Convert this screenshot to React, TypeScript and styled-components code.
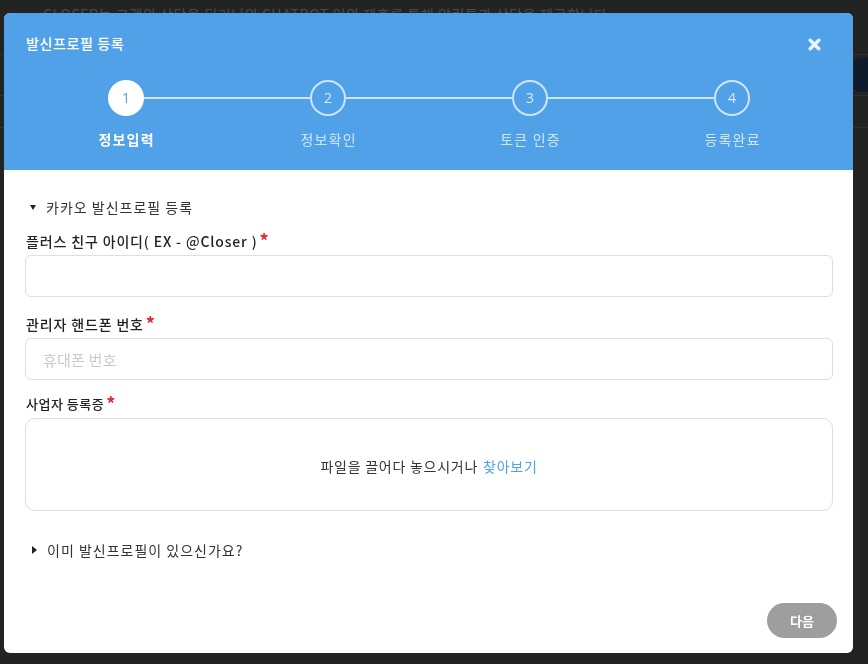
import React from "react";
import styled, { createGlobalStyle } from "styled-components";

const Global = createGlobalStyle`
  html, body { margin: 0; padding: 0; }
  body {
    background: #232323;
    font-family: "Noto Sans CJK KR", "Noto Sans", sans-serif;
    width: 868px;
    height: 664px;
    overflow: hidden;
  }
  * { box-sizing: border-box; }
`;

const Page = styled.div`
  width: 868px;
  height: 664px;
  display: flex;
  flex-direction: column;
`;

const PageNotice = styled.p`
  margin: 0;
  padding: 4px 0 0 43px;
  font-size: 14px;
  line-height: 20px;
  letter-spacing: 0.6px;
  color: #4a4a4a;
  white-space: nowrap;
`;

const PageRows = styled.div`
  display: flex;
  flex-direction: column;
  align-items: flex-end;
  margin-top: 15px;
`;

const PageRow = styled.div<{ $h: number }>`
  width: 100%;
  height: ${(p) => p.$h}px;
  border-bottom: 1px solid #303030;
  display: flex;
  justify-content: flex-end;
  align-items: center;
`;

const PageChip = styled.div`
  width: 14px;
  height: 34px;
  background: #0f1a2b;
  border-radius: 6px 0 0 6px;
`;

const Modal = styled.div`
  position: fixed;
  left: 4px;
  top: 13px;
  width: 849px;
  height: 640px;
  background: #fff;
  border-radius: 6px;
  overflow: hidden;
  display: flex;
  flex-direction: column;
`;

const Header = styled.div`
  background: #51a1e8;
  padding: 20px 0 21px;
  display: flex;
  flex-direction: column;
`;

const TitleRow = styled.div`
  display: flex;
  align-items: center;
  justify-content: space-between;
  padding: 0 32px 0 22px;
  height: 20px;
`;

const Title = styled.h2`
  margin: 0;
  font-size: 14px;
  line-height: 20px;
  font-weight: 500;
  letter-spacing: 0.6px;
  color: #fff;
`;

const CloseButton = styled.button`
  border: 0;
  background: none;
  padding: 0;
  width: 14px;
  height: 14px;
  display: flex;
  align-items: center;
  justify-content: center;
  cursor: pointer;
  margin-top: 2px;
`;

const Steps = styled.ol`
  list-style: none;
  margin: 27px 0 0;
  padding: 0 20px 0 21px;
  display: grid;
  grid-template-columns: repeat(4, 1fr);
`;

const Step = styled.li<{ $last?: boolean }>`
  position: relative;
  display: flex;
  flex-direction: column;
  align-items: center;
  &::after {
    content: "";
    display: ${(p) => (p.$last ? "none" : "block")};
    position: absolute;
    top: 17px;
    left: calc(50% + 18px);
    width: calc(100% - 36px);
    height: 2px;
    background: rgba(255, 255, 255, 0.72);
  }
`;

const Circle = styled.span<{ $active?: boolean }>`
  width: 36px;
  height: 36px;
  border-radius: 50%;
  border: 2px solid rgba(255, 255, 255, 0.72);
  background: ${(p) => (p.$active ? "#fff" : "transparent")};
  color: ${(p) => (p.$active ? "#51a1e8" : "rgba(255,255,255,0.78)")};
  font-size: 14px;
  line-height: 1;
  display: flex;
  align-items: center;
  justify-content: center;
  font-family: "Open Sans", "Noto Sans", sans-serif;
`;

const StepLabel = styled.span<{ $active?: boolean }>`
  margin-top: 13px;
  font-size: 14px;
  line-height: 20px;
  letter-spacing: 1.2px;
  text-indent: 1.2px;
  font-weight: ${(p) => (p.$active ? 700 : 400)};
  color: ${(p) => (p.$active ? "#fff" : "rgba(255,255,255,0.72)")};
`;

const Body = styled.div`
  flex: 1;
  display: flex;
  flex-direction: column;
  padding: 27px 20px 15px 21px;
`;

const Disclosure = styled.div<{ $gap: number }>`
  display: flex;
  align-items: center;
  gap: 10px;
  padding-left: 5px;
  margin-top: ${(p) => p.$gap}px;
  font-size: 14px;
  line-height: 20px;
  letter-spacing: 1px;
  color: #333;
`;

const Caret = styled.span<{ $open?: boolean }>`
  width: 0;
  height: 0;
  ${(p) =>
    p.$open
      ? `border-left: 3.5px solid transparent; border-right: 3.5px solid transparent; border-top: 5px solid #222;`
      : `border-top: 4px solid transparent; border-bottom: 4px solid transparent; border-left: 5px solid #222; margin-left: 2px;`}
`;

const Label = styled.label<{ $small?: boolean; $gap: number }>`
  display: flex;
  align-items: center;
  margin-top: ${(p) => p.$gap}px;
  padding-left: 1px;
  font-size: ${(p) => (p.$small ? 13 : 14)}px;
  line-height: ${(p) => (p.$small ? 18 : 20)}px;
  letter-spacing: ${(p) => (p.$small ? 0.5 : 0.85)}px;
  font-weight: 500;
  color: #222;
`;

const Required = styled.span`
  color: #e8262f;
  font-weight: 700;
  font-size: 18px;
  line-height: 18px;
  margin-left: 2px;
  margin-top: -3px;
`;

const Input = styled.input`
  margin-top: 4px;
  width: 100%;
  height: 42px;
  border: 1px solid #dedede;
  border-radius: 6px;
  padding: 0 17px;
  font-size: 15px;
  letter-spacing: 0.2px;
  font-family: inherit;
  color: #333;
  outline: none;
  &::placeholder { color: #c9c9c9; }
`;

const DropZone = styled.div`
  margin-top: 5px;
  height: 93px;
  border: 1px solid #dedede;
  border-radius: 10px;
  display: flex;
  align-items: center;
  justify-content: center;
  font-size: 14px;
  letter-spacing: 0.75px;
  color: #333;
  gap: 5px;
  padding-top: 2px;
`;

const Browse = styled.span`
  color: #4da3e8;
  cursor: pointer;
`;

const Footer = styled.div`
  margin-top: auto;
  display: flex;
  justify-content: flex-end;
`;

const NextButton = styled.button`
  width: 70px;
  height: 35px;
  border: 0;
  border-radius: 18px;
  background: #9d9e9d;
  color: #fff;
  font-family: inherit;
  font-size: 13px;
  font-weight: 700;
  margin-right: -4px;
`;

const steps = ["정보입력", "정보확인", "토큰 인증", "등록완료"];

export default function App() {
  return (
    <>
      <Global />
      <Page>
        <PageNotice>
          CLOSER는 고객의 상담을 딥러닝의 CHATBOT 인의 제휴를 통해 알림톡과 상담을 제공합니다.
        </PageNotice>
        <PageRows>
          <PageRow $h={16} />
          <PageRow $h={41}>
            <PageChip />
          </PageRow>
          <PageRow $h={32} />
        </PageRows>
      </Page>
      <Modal>
        <Header>
          <TitleRow>
            <Title>발신프로필 등록</Title>
            <CloseButton aria-label="close">
              <svg width="13" height="13" viewBox="0 0 13 13">
                <path
                  d="M2.2 2.2 L10.8 10.8 M10.8 2.2 L2.2 10.8"
                  stroke="rgba(255,255,255,0.88)"
                  strokeWidth="3.4"
                  strokeLinecap="round"
                />
              </svg>
            </CloseButton>
          </TitleRow>
          <Steps>
            {steps.map((s, i) => (
              <Step key={s} $last={i === steps.length - 1}>
                <Circle $active={i === 0}>{i + 1}</Circle>
                <StepLabel $active={i === 0}>{s}</StepLabel>
              </Step>
            ))}
          </Steps>
        </Header>
        <Body>
          <Disclosure $gap={0}>
            <Caret $open />
            카카오 발신프로필 등록
          </Disclosure>
          <Label $gap={14}>
            플러스 친구 아이디( EX - @Closer )<Required>*</Required>
          </Label>
          <Input />
          <Label $gap={17}>
            관리자 핸드폰 번호<Required>*</Required>
          </Label>
          <Input placeholder="휴대폰 번호" />
          <Label $small $gap={15}>
            사업자 등록증<Required>*</Required>
          </Label>
          <DropZone>
            파일을 끌어다 놓으시거나 <Browse>찾아보기</Browse>
          </DropZone>
          <Disclosure $gap={29}>
            <Caret />
            이미 발신프로필이 있으신가요?
          </Disclosure>
          <Footer>
            <NextButton>다음</NextButton>
          </Footer>
        </Body>
      </Modal>
    </>
  );
}
